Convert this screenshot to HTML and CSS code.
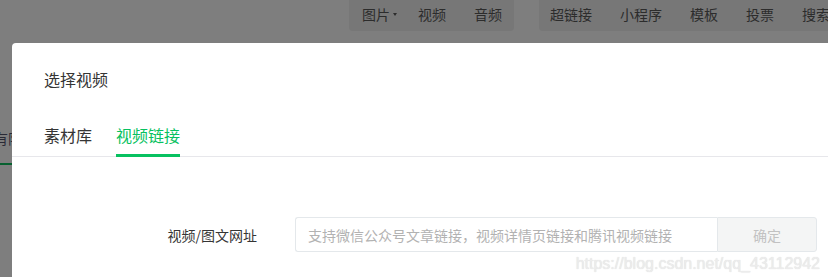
FILE: index.html
```html
<!DOCTYPE html>
<html lang="zh-CN">
<head>
  <meta charset="UTF-8" />
  <title>选择视频</title>
  <link rel="stylesheet" href="styles.css">
</head>
<body>
  <div class="editor">
    <div class="toolbar">
      <div class="tool-group first">
        <span class="tool caret">图片</span>
        <span class="tool">视频</span>
        <span class="tool">音频</span>
      </div>
      <div class="tool-group">
        <span class="tool">超链接</span>
        <span class="tool">小程序</span>
        <span class="tool">模板</span>
        <span class="tool">投票</span>
        <span class="tool">搜索</span>
      </div>
    </div>
    <div class="page-body">
      <span class="page-tab">有限</span>
    </div>
  </div>

  <div class="dialog">
    <div class="dialog-title">选择视频</div>
    <div class="tabs">
      <span class="tab">素材库</span>
      <span class="tab active">视频链接</span>
    </div>
    <div class="form-row">
      <label class="form-label">视频/图文网址</label>
      <div class="input-group">
        <input class="url-input" type="text" placeholder="支持微信公众号文章链接，视频详情页链接和腾讯视频链接">
        <button class="confirm-btn" disabled>确定</button>
      </div>
    </div>
  </div>

  <div class="watermark">https://blog.csdn.net/qq_43112942</div>
</body>
</html>
```

FILE: styles.css
```css
:root {
  --mask: #7e7e7e;
  --mask-dark: #777777;
  --green: #07c160;
  --border: #e4e8eb;
  --font: "Noto Sans CJK SC", "Liberation Sans", sans-serif;
}
* { box-sizing: border-box; }
body {
  margin: 0;
  width: 828px;
  height: 277px;
  overflow: hidden;
  position: relative;
  background: var(--mask);
  font-family: var(--font);
}

/* page behind the dialog, already dimmed */
.toolbar {
  display: flex;
  gap: 25px;
  padding-left: 349px;
  height: 32px;
}
.tool-group {
  display: flex;
  gap: 28px;
  align-items: center;
  height: 31px;
  padding: 0 12px 4px 11px;
  background: var(--mask-dark);
  border-radius: 0 0 4px 4px;
  white-space: nowrap;
}
.tool-group.first { padding-left: 13px; }
.tool {
  font-size: 14px;
  line-height: 20px;
  color: #2c2c2c;
  position: relative;
}
.caret::after {
  content: "";
  position: absolute;
  right: -7px;
  top: 9px;
  border: 2px solid transparent;
  border-top: 3px solid #2c2c2c;
}
.page-body {
  padding-top: 93px;
  margin-left: -6px;
}
.page-tab {
  display: inline-block;
  font-size: 14px;
  line-height: 20px;
  color: #2a2a36;
  padding-bottom: 15px;
  border-bottom: 2px solid #06602f;
}

/* dialog */
.dialog {
  position: absolute;
  left: 12px;
  top: 43px;
  width: 880px;
  height: 300px;
  background: #fff;
  border-radius: 4px;
  padding: 24px 0 0 32px;
}
.dialog-title {
  font-size: 16px;
  line-height: 24px;
  color: #353535;
}
.tabs {
  display: flex;
  gap: 24px;
  margin-top: 32px;
  margin-left: -32px;
  padding-left: 32px;
  border-bottom: 1px solid #e7e7eb;
}
.tab {
  font-size: 16px;
  line-height: 24px;
  color: #353535;
  padding-bottom: 7px;
  border-bottom: 3px solid transparent;
  margin-bottom: -1px;
}
.tab.active {
  color: var(--green);
  border-bottom-color: var(--green);
}
.form-row {
  display: flex;
  align-items: center;
  margin-top: 60px;
}
.form-label {
  width: 213px;
  text-align: right;
  font-size: 14px;
  color: #353535;
  margin-right: 38px;
}
.input-group {
  display: flex;
  height: 35px;
}
.url-input {
  width: 422px;
  height: 35px;
  border: 1px solid var(--border);
  border-right: none;
  border-radius: 3px 0 0 3px;
  padding: 0 12px;
  font-family: var(--font);
  font-size: 14px;
  color: #353535;
  outline: none;
}
.url-input::placeholder { color: #b2b2b2; }
.confirm-btn {
  width: 100px;
  height: 35px;
  border: 1px solid var(--border);
  border-radius: 0 3px 3px 0;
  background: #f4f5f5;
  color: #c2c2c2;
  font-family: var(--font);
  font-size: 14px;
}

.watermark {
  position: absolute;
  right: 8px;
  bottom: 4px;
  font-family: "Liberation Sans", sans-serif;
  font-size: 16px;
  color: #ececec;
  text-shadow: 0 0 1px #d8d8d8;
}
```
